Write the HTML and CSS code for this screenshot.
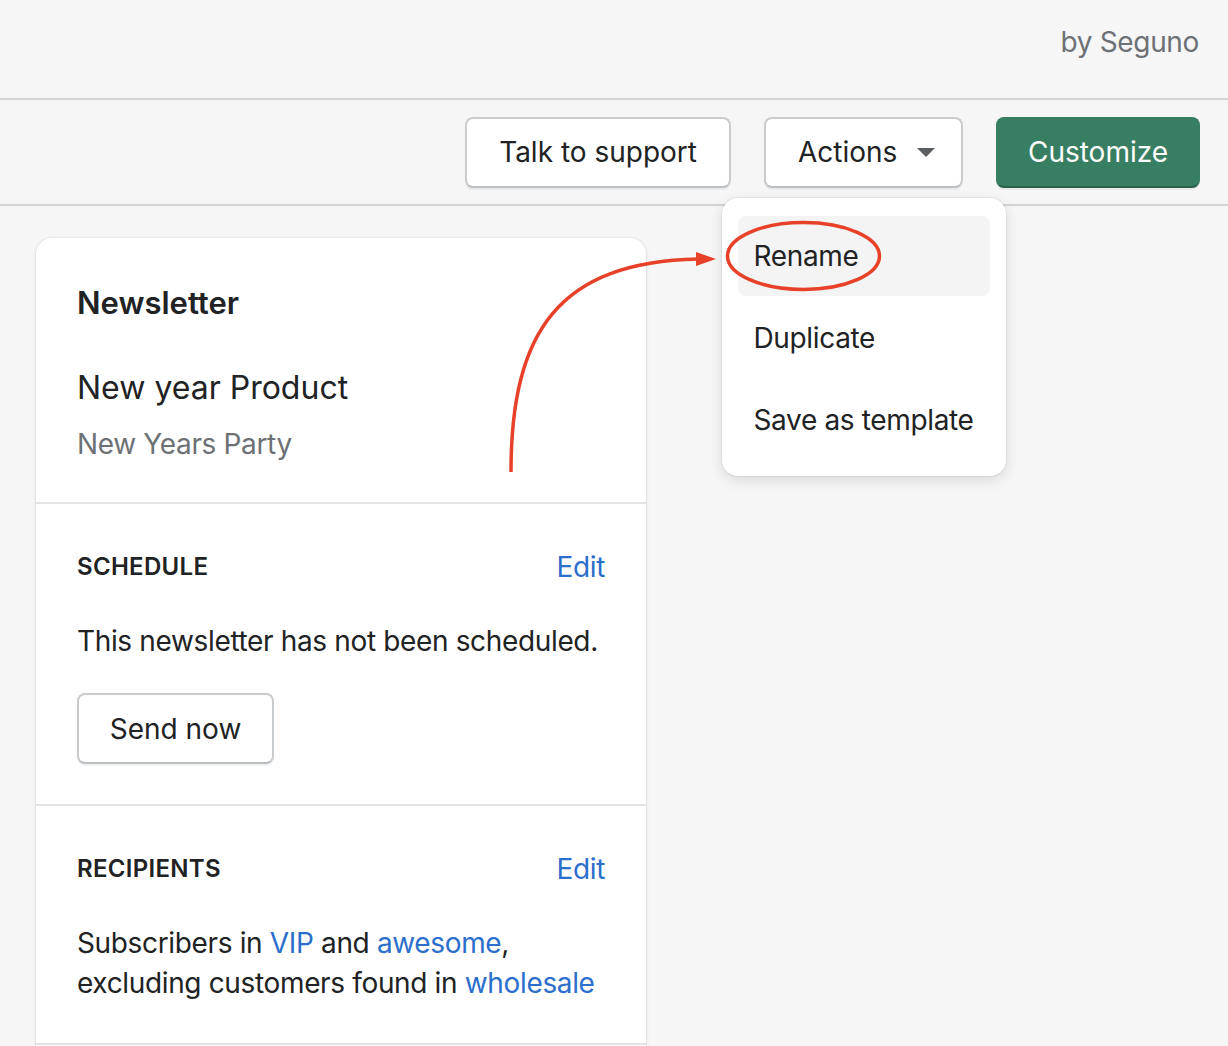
FILE: index.html
```html
<!DOCTYPE html>
<html lang="en">
<head>
    <meta charset="UTF-8">
    <meta name="viewport" content="width=device-width, initial-scale=1.0">
    <title>Newsletter - Seguno</title>
    <link rel="stylesheet" href="styles.css">
</head>
<body>
    <header class="app-bar">
        <span class="by-line">by Seguno</span>
    </header>

    <div class="toolbar">
        <button class="btn">Talk to support</button>
        <div class="actions-wrap">
            <button class="btn btn-actions">
                Actions
                <span class="caret"></span>
            </button>
            <!-- open actions menu -->
            <div class="popover">
                <div class="menu-item active">Rename</div>
                <div class="menu-item">Duplicate</div>
                <div class="menu-item">Save as template</div>
            </div>
        </div>
        <button class="btn btn-primary">Customize</button>
    </div>

    <main class="page">
        <div class="card">
            <section class="card-section">
                <h2 class="card-title">Newsletter</h2>
                <p class="campaign-name">New year Product</p>
                <p class="campaign-sub">New Years Party</p>
            </section>

            <section class="card-section">
                <div class="section-head">
                    <h3>SCHEDULE</h3>
                    <a href="#" class="link">Edit</a>
                </div>
                <p class="body-text">This newsletter has not been scheduled.</p>
                <button class="btn btn-send">Send now</button>
            </section>

            <section class="card-section">
                <div class="section-head">
                    <h3>RECIPIENTS</h3>
                    <a href="#" class="link">Edit</a>
                </div>
                <p class="body-text">Subscribers in <a href="#" class="link">VIP</a> and <a href="#" class="link">awesome</a>,<br>excluding customers found in <a href="#" class="link">wholesale</a></p>
            </section>

            <section class="card-section"></section>
        </div>
    </main>

    <!-- annotation drawn over the screenshot -->
    <svg class="annotation" width="1228" height="1046" viewBox="0 0 1228 1046">
        <path d="M511 472 C 511 330, 560 262, 698 259" fill="none" stroke="#e8412a" stroke-width="3.5"/>
        <polygon points="716,259 696,252 696,266" fill="#e8412a"/>
        <ellipse cx="803.5" cy="256" rx="76" ry="33.5" fill="none" stroke="#e8412a" stroke-width="3.5"/>
    </svg>
</body>
</html>
```

FILE: styles.css
```css
body {
    margin: 0;
    padding: 0;
    background-color: #f6f6f7;
    font-family: Inter, "Noto Sans", sans-serif;
    color: #202223;
    font-size: 28px;
    line-height: 40px;
    letter-spacing: -0.35px;
    position: relative;
    overflow: hidden;
    height: 1046px;
}

.app-bar {
    height: 100px;
    border-bottom: 2px solid #d2d5d8;
    display: flex;
    justify-content: flex-end;
    align-items: flex-start;
    padding: 22px 29px 0 0;
    box-sizing: border-box;
}

.by-line {
    color: #6d7175;
}

.toolbar {
    height: 106px;
    border-bottom: 2px solid #d2d5d8;
    box-sizing: border-box;
    display: flex;
    justify-content: flex-end;
    align-items: center;
    gap: 33px;
    padding-right: 28px;
}

.btn {
    font-family: inherit;
    font-size: 28px;
    letter-spacing: 0;
    color: #202223;
    background: #fff;
    border: 2px solid #c9cccf;
    border-bottom-color: #babfc3;
    border-radius: 8px;
    height: 71px;
    padding: 0 32px;
    box-shadow: 0 2px 0 rgba(0, 0, 0, 0.05);
    cursor: pointer;
}

.btn-primary {
    background: #377e62;
    border-color: #377e62;
    border-bottom-color: #2a614b;
    color: #fff;
    width: 204px;
    padding: 0;
}

.actions-wrap {
    position: relative;
}

.btn-actions {
    display: flex;
    align-items: center;
    gap: 20px;
    width: 199px;
    padding: 0 0 0 32px;
}

.caret {
    width: 0;
    height: 0;
    border-left: 9px solid transparent;
    border-right: 9px solid transparent;
    border-top: 9px solid #5c5f62;
}

.popover {
    position: absolute;
    top: 81px;
    left: 50%;
    transform: translateX(-50%);
    width: 284px;
    box-sizing: border-box;
    background: #fff;
    border-radius: 16px;
    padding: 18px 16px 16px;
    display: flex;
    flex-direction: column;
    gap: 2px;
    box-shadow: 0 0 0 1px rgba(6, 44, 82, 0.06), 0 4px 14px rgba(0, 0, 0, 0.12);
    z-index: 2;
}

.menu-item {
    height: 80px;
    line-height: 80px;
    padding-left: 16px;
    border-radius: 8px;
    white-space: nowrap;
}

.menu-item.active {
    background: #f4f4f5;
}

.page {
    padding: 32px 36px;
}

.card {
    width: 610px;
    background: #fff;
    border-radius: 16px;
    box-shadow: 0 0 0 1px rgba(63, 63, 68, 0.06), 0 2px 4px rgba(63, 63, 68, 0.12);
}

.card-section {
    padding: 43px 41px 40px 41px;
    border-top: 2px solid #e1e3e5;
}

.card-section:first-child {
    border-top: none;
    padding-top: 40px;
    padding-bottom: 38px;
}

.card-title {
    margin: 0;
    font-size: 31px;
    font-weight: 600;
    line-height: 50px;
    letter-spacing: 0;
}

.campaign-name {
    margin: 35px 0 0;
    font-size: 32px;
    line-height: 50px;
    letter-spacing: 0;
}

.campaign-sub {
    margin: 11px 0 0;
    color: #6d7175;
}

.section-head {
    display: flex;
    justify-content: space-between;
    align-items: center;
}

.section-head h3 {
    margin: 0;
    font-size: 24px;
    font-weight: 600;
    letter-spacing: 0.3px;
}

.link {
    color: #2c6ecb;
    text-decoration: none;
}

.body-text {
    margin: 34px 0 0;
}

.btn-send {
    margin-top: 32px;
    width: 197px;
    padding: 0;
}

.annotation {
    position: absolute;
    top: 0;
    left: 0;
    pointer-events: none;
    z-index: 3;
}
```
